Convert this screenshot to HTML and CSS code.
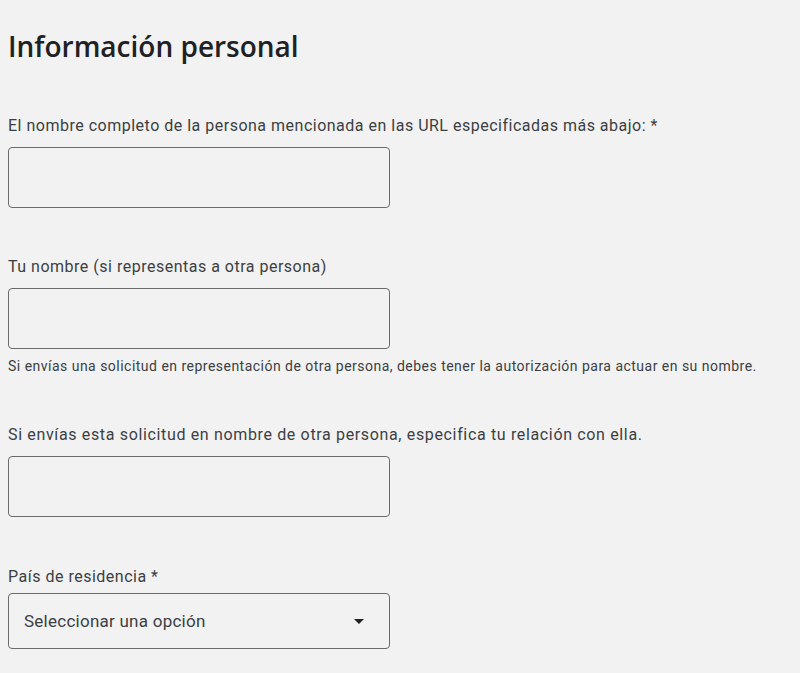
FILE: index.html
```html
<!DOCTYPE html>
<html lang="es">
<head>
<meta charset="utf-8">
<link rel="stylesheet" href="styles.css">
</head>
<body>
<main class="form">
  <h1 class="title">Información personal</h1>

  <div class="field field-first">
    <label class="label">El nombre completo de la persona mencionada en las URL especificadas más abajo: *</label>
    <div class="input"></div>
  </div>

  <div class="field field-second">
    <label class="label">Tu nombre (si representas a otra persona)</label>
    <div class="input"></div>
    <p class="help">Si envías una solicitud en representación de otra persona, debes tener la autorización para actuar en su nombre.</p>
  </div>

  <div class="field field-third">
    <label class="label label-wide">Si envías esta solicitud en nombre de otra persona, especifica tu relación con ella.</label>
    <div class="input"></div>
  </div>

  <div class="field">
    <label class="label label-tight">País de residencia *</label>
    <div class="select">
      <span class="select-text">Seleccionar una opción</span>
      <svg class="arrow" width="10" height="5" viewBox="0 0 10 5"><path d="M0 0h10L5 5z" fill="#202124"/></svg>
    </div>
  </div>
</main>
</body>
</html>
```

FILE: styles.css
```css
html, body {
  margin: 0;
  padding: 0;
  background: #f2f2f2;
}
body {
  font-family: Roboto, "Liberation Sans", sans-serif;
  color: #3c4043;
}
.form {
  padding: 28px 8px 0 8px;
  display: flex;
  flex-direction: column;
}
.title {
  margin: 0;
  font-family: "Open Sans", sans-serif;
  font-weight: 600;
  font-size: 28px;
  line-height: 36px;
  color: #202124;
  letter-spacing: 0;
}
.field {
  display: flex;
  flex-direction: column;
  margin-top: 50px;
}
.field-first {
  margin-top: 52px;
}
.field-second {
  margin-top: 49px;
}
.field-third {
  margin-top: 51px;
}
.label {
  font-size: 16px;
  line-height: 20px;
  margin-bottom: 11px;
  letter-spacing: 0.5px;
}
.label-wide {
  letter-spacing: 0.65px;
}
.label-tight {
  margin-bottom: 6px;
}
.input {
  width: 380px;
  height: 59px;
  border: 1px solid #6b6b6b;
  border-radius: 4px;
}
.help {
  margin: 9px 0 0 0;
  font-size: 14px;
  line-height: 16px;
  letter-spacing: 0.48px;
}
.select {
  height: 54px;
  border: 1px solid #6b6b6b;
  border-radius: 4px;
  display: flex;
  align-items: center;
  justify-content: space-between;
  padding: 0 25px 0 15px;
  box-sizing: content-box;
  width: 340px;
}
.select-text {
  font-size: 17px;
  letter-spacing: 0.25px;
  color: #3c4043;
}
.arrow {
  display: block;
}
```
